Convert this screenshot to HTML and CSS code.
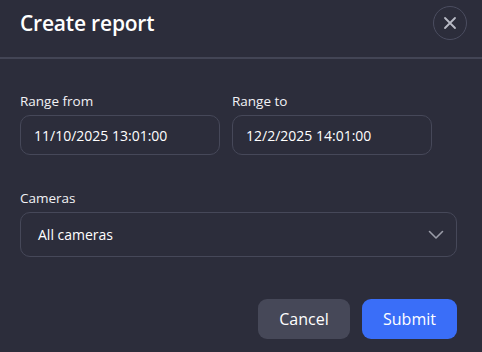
FILE: index.html
```html
<!DOCTYPE html>
<html lang="en">
<head>
  <meta charset="UTF-8" />
  <title>Create report</title>
  <link rel="stylesheet" href="styles.css">
</head>
<body>
  <div class="dialog">
    <header class="dialog-header">
      <h1 class="title">Create report</h1>
      <button type="button" class="close-btn" aria-label="Close">
        <svg width="14" height="14" viewBox="0 0 14 14">
          <path d="M2 2 L12 12 M12 2 L2 12" stroke="#b9bbc6" stroke-width="1.8" stroke-linecap="round" fill="none"/>
        </svg>
      </button>
    </header>

    <form class="dialog-body">
      <div class="row">
        <div class="field">
          <label for="from">Range from</label>
          <input type="text" id="from" class="input" value="11/10/2025 13:01:00">
        </div>
        <div class="field">
          <label for="to">Range to</label>
          <input type="text" id="to" class="input" value="12/2/2025 14:01:00">
        </div>
      </div>

      <div class="field wide">
        <label for="cameras">Cameras</label>
        <div class="select">
          <span>All cameras</span>
          <svg width="16" height="10" viewBox="0 0 16 10">
            <path d="M1.5 1.5 L8 8 L14.5 1.5" stroke="#9a9ca8" stroke-width="1.6" fill="none" stroke-linecap="round" stroke-linejoin="round"/>
          </svg>
        </div>
      </div>

      <div class="button-container">
        <button type="button" class="btn cancel">Cancel</button>
        <button type="submit" class="btn submit">Submit</button>
      </div>
    </form>
  </div>
</body>
</html>
```

FILE: styles.css
```css
body {
  margin: 0;
  padding: 0;
  background: #2c2d3b;
  font-family: 'Open Sans', sans-serif;
  color: #fff;
}

.dialog {
  width: 482px;
  height: 352px;
}

.dialog-header {
  height: 57px;
  border-bottom: 2px solid #434555;
  display: flex;
  align-items: center;
  justify-content: space-between;
  padding: 0 15px 0 20px;
}

.title {
  margin: 0 0 11px 0;
  font-size: 21px;
  font-weight: 600;
  letter-spacing: -0.2px;
}

.close-btn {
  width: 34px;
  height: 34px;
  border-radius: 50%;
  border: 1px solid #4b4d60;
  background: transparent;
  display: flex;
  align-items: center;
  justify-content: center;
  padding: 0;
  margin-bottom: 11px;
  cursor: pointer;
}

.dialog-body {
  padding: 33px 25px 0 20px;
}

.row {
  display: flex;
  gap: 12px;
}

.field label {
  display: block;
  font-size: 13.5px;
  color: #f2f2f5;
  margin-bottom: 5px;
}

.input {
  width: 200px;
  height: 40px;
  box-sizing: border-box;
  background: transparent;
  border: 1px solid #464859;
  border-radius: 10px;
  padding: 0 13px;
  color: #fff;
  font-family: inherit;
  font-size: 14px;
  outline: none;
}

.wide {
  margin-top: 34px;
}

.select {
  height: 45px;
  box-sizing: border-box;
  border: 1px solid #464859;
  border-radius: 10px;
  display: flex;
  align-items: center;
  justify-content: space-between;
  padding: 0 12px 0 17px;
  font-size: 14px;
}

.button-container {
  display: flex;
  justify-content: flex-end;
  gap: 12px;
  margin-top: 42px;
}

.btn {
  height: 40px;
  border: none;
  border-radius: 9px;
  color: #fff;
  font-family: inherit;
  font-size: 16px;
  cursor: pointer;
}

.cancel {
  width: 92px;
  background: #464858;
}

.submit {
  width: 95px;
  background: #3a6ef8;
}
```
